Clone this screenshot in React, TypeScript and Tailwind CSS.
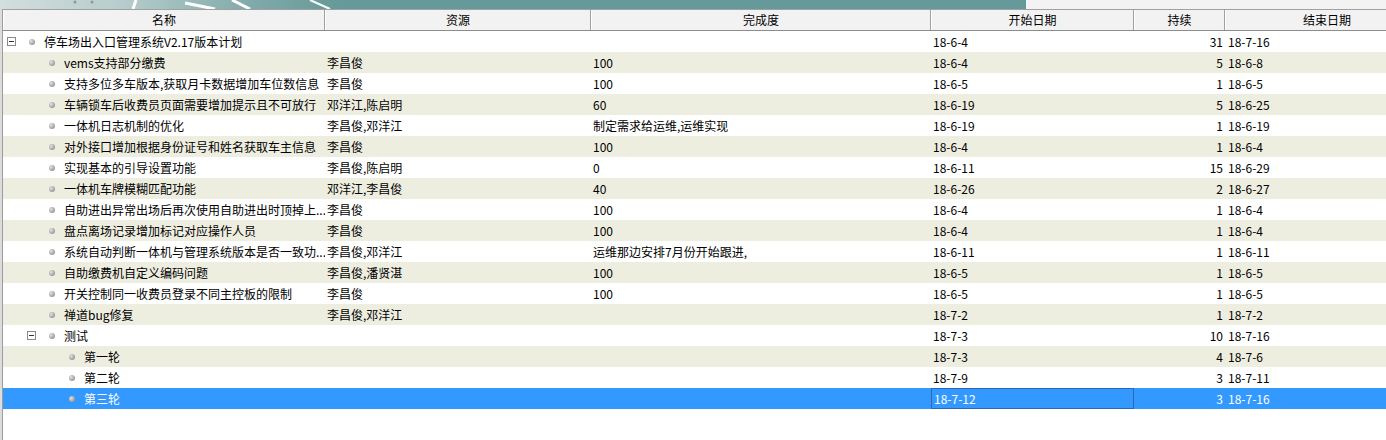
import React from "react";

type Row = {
  name: string;
  level: number;
  expander?: boolean;
  res?: string;
  done?: string;
  start: string;
  dur: string;
  end: string;
};

const rows: Row[] = [
  { name: "停车场出入口管理系统V2.17版本计划", level: 0, expander: true, start: "18-6-4", dur: "31", end: "18-7-16" },
  { name: "vems支持部分缴费", level: 1, res: "李昌俊", done: "100", start: "18-6-4", dur: "5", end: "18-6-8" },
  { name: "支持多位多车版本,获取月卡数据增加车位数信息", level: 1, res: "李昌俊", done: "100", start: "18-6-5", dur: "1", end: "18-6-5" },
  { name: "车辆锁车后收费员页面需要增加提示且不可放行", level: 1, res: "邓洋江,陈启明", done: "60", start: "18-6-19", dur: "5", end: "18-6-25" },
  { name: "一体机日志机制的优化", level: 1, res: "李昌俊,邓洋江", done: "制定需求给运维,运维实现", start: "18-6-19", dur: "1", end: "18-6-19" },
  { name: "对外接口增加根据身份证号和姓名获取车主信息", level: 1, res: "李昌俊", done: "100", start: "18-6-4", dur: "1", end: "18-6-4" },
  { name: "实现基本的引导设置功能", level: 1, res: "李昌俊,陈启明", done: "0", start: "18-6-11", dur: "15", end: "18-6-29" },
  { name: "一体机车牌模糊匹配功能", level: 1, res: "邓洋江,李昌俊", done: "40", start: "18-6-26", dur: "2", end: "18-6-27" },
  { name: "自助进出异常出场后再次使用自助进出时顶掉上...", level: 1, res: "李昌俊", done: "100", start: "18-6-4", dur: "1", end: "18-6-4" },
  { name: "盘点离场记录增加标记对应操作人员", level: 1, res: "李昌俊", done: "100", start: "18-6-4", dur: "1", end: "18-6-4" },
  { name: "系统自动判断一体机与管理系统版本是否一致功...", level: 1, res: "李昌俊,邓洋江", done: "运维那边安排7月份开始跟进,", start: "18-6-11", dur: "1", end: "18-6-11" },
  { name: "自助缴费机自定义编码问题", level: 1, res: "李昌俊,潘贤湛", done: "100", start: "18-6-5", dur: "1", end: "18-6-5" },
  { name: "开关控制同一收费员登录不同主控板的限制", level: 1, res: "李昌俊", done: "100", start: "18-6-5", dur: "1", end: "18-6-5" },
  { name: "禅道bug修复", level: 1, res: "李昌俊,邓洋江", start: "18-7-2", dur: "1", end: "18-7-2" },
  { name: "测试", level: 1, expander: true, start: "18-7-3", dur: "10", end: "18-7-16" },
  { name: "第一轮", level: 2, start: "18-7-3", dur: "4", end: "18-7-6" },
  { name: "第二轮", level: 2, start: "18-7-9", dur: "3", end: "18-7-11" },
  { name: "第三轮", level: 2, start: "18-7-12", dur: "3", end: "18-7-16" },
];

const indentClass = ["pl-0", "pl-[20px]", "pl-[40px]"];

function Expander() {
  return (
    <div className="ml-[4px] w-[9px] h-[9px] border border-[#8a8a8a] bg-white flex items-center justify-center">
      <div className="w-[5px] h-[1px] bg-[#333]" />
    </div>
  );
}

function Bullet() {
  return (
    <div className="ml-[6px] w-[6px] h-[6px] rounded-full bg-[radial-gradient(circle_at_35%_35%,#e2e2e2,#9a9a9a_70%,#8a8a8a)]" />
  );
}

function HeaderCell({ label, w }: { label: string; w: string }) {
  return (
    <div className={`${w} h-full shrink-0 border-l border-white border-r border-r-[#a0a0a0] flex items-center justify-center`}>
      {label}
    </div>
  );
}

export default function App() {
  return (
    <div
      className="w-[1386px] h-[440px] overflow-hidden bg-white text-[12px] text-black flex flex-col"
      style={{ fontFamily: '"Noto Sans CJK SC", "Microsoft YaHei", sans-serif' }}
    >
      {/* top strip */}
      <div className="h-[9px] flex shrink-0">
        <div className="w-[1026px] h-full relative overflow-hidden bg-[linear-gradient(90deg,#d3dede_0%,#b6cccc_12%,#82abab_24%,#669999_33%,#669999_100%)]">
          <svg className="absolute left-0 top-0" width="400" height="9" viewBox="0 0 400 9">
            <circle cx="75" cy="2" r="1.5" fill="#8a9a9a" />
            <circle cx="92" cy="2" r="1.5" fill="#8a9a9a" />
            <path d="M133 9 L136 0" stroke="#ffffff" strokeWidth="3" />
            <path d="M185 3 L215 9" stroke="#ffffff" strokeWidth="3" />
            <path d="M232 0 L250 9" stroke="#ffffff" strokeWidth="3" />
            <path d="M310 0 L330 9" stroke="#ffffff" strokeWidth="2" />
          </svg>
        </div>
        <div className="flex-1 h-full bg-[#f3f3f3]" />
      </div>

      <div className="flex flex-1 min-h-0">
        {/* left border */}
        <div className="w-[2px] bg-[#dcdcdc] shrink-0" />
        <div className="w-[1px] bg-[#9c9c9c] shrink-0" />

        <div className="flex-1 min-w-0 flex flex-col">
          {/* header */}
          <div className="h-[22px] shrink-0 flex bg-[#f2f2f2] border-t border-[#a0a0a0] border-b border-b-[#8c8c8c]">
            <HeaderCell label="名称" w="w-[322px]" />
            <HeaderCell label="资源" w="w-[266px]" />
            <HeaderCell label="完成度" w="w-[340px]" />
            <HeaderCell label="开始日期" w="w-[203px]" />
            <HeaderCell label="持续" w="w-[91px]" />
            <HeaderCell label="结束日期" w="w-[204px]" />
          </div>

          {/* body */}
          <div className="flex flex-col">
            {rows.map((r, i) => {
              const selected = i === rows.length - 1;
              const bg = selected ? "bg-[#3399ff] text-white" : i % 2 === 1 ? "bg-[#eeeee0]" : "bg-white";
              return (
                <div key={i} className={`h-[21px] flex leading-[21px] whitespace-nowrap ${bg}`}>
                  <div className={`w-[322px] shrink-0 overflow-hidden flex items-center ${indentClass[r.level]}`}>
                    <div className="w-[20px] shrink-0 flex items-center">{r.expander ? <Expander /> : null}</div>
                    <div className="w-[21px] shrink-0 flex items-center">
                      <Bullet />
                    </div>
                    <span>{r.name}</span>
                  </div>
                  <div className="w-[266px] shrink-0 overflow-hidden pl-[2px]">{r.res ?? ""}</div>
                  <div className="w-[340px] shrink-0 overflow-hidden pl-[2px]">{r.done ?? ""}</div>
                  <div
                    className={`w-[203px] shrink-0 overflow-hidden pl-[2px] ${
                      selected ? "border border-[#2d68b8] leading-[19px] pl-[1px]" : ""
                    }`}
                  >
                    {r.start}
                  </div>
                  <div className="w-[91px] shrink-0 overflow-hidden text-right pr-[2px]">{r.dur}</div>
                  <div className="w-[204px] shrink-0 overflow-hidden pl-[3px]">{r.end}</div>
                </div>
              );
            })}
          </div>
        </div>
      </div>
    </div>
  );
}
